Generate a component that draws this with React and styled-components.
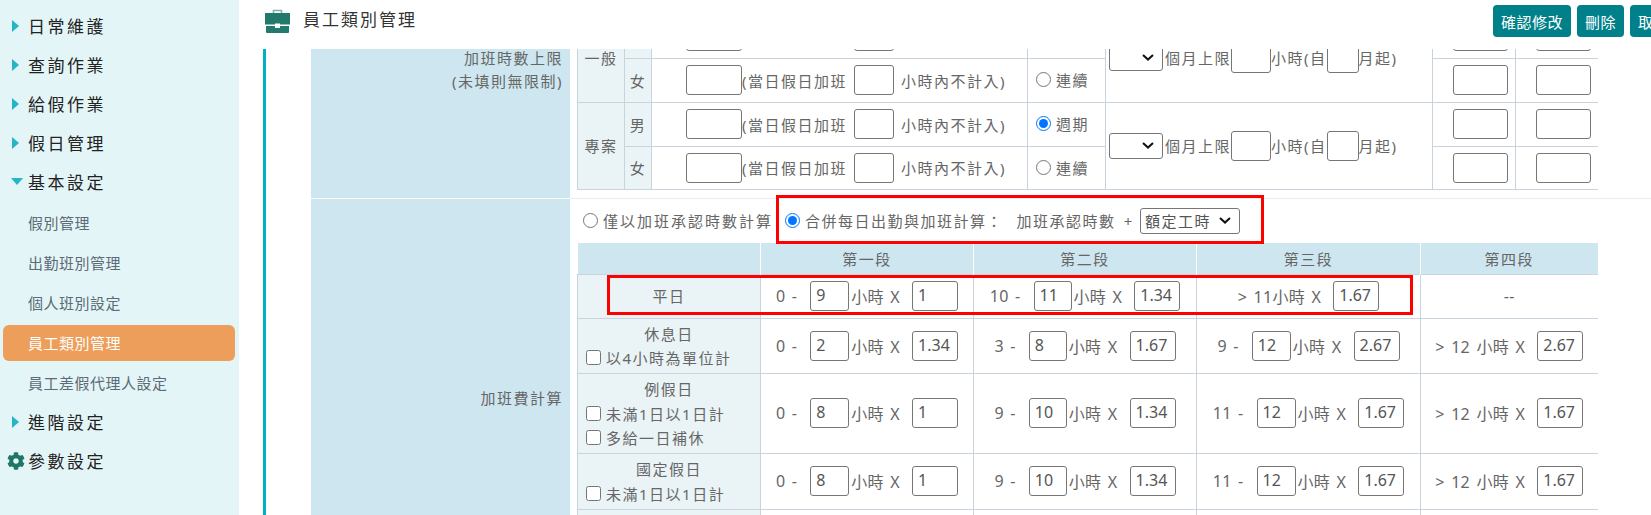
import React from "react";
import styled, { createGlobalStyle } from "styled-components";
import { FaCog } from "react-icons/fa";

const chevron =
  "url(\"data:image/svg+xml,%3Csvg xmlns='http://www.w3.org/2000/svg' width='12' height='7' viewBox='0 0 12 7'%3E%3Cpath d='M1 1l5 4.6L11 1' fill='none' stroke='%23111' stroke-width='2'/%3E%3C/svg%3E\")";

const Global = createGlobalStyle`
  html, body {
    margin: 0;
    height: 100%;
    overflow: hidden;
    background: #fff;
  }
  body {
    font-family: "Noto Sans", "Noto Sans CJK TC", sans-serif;
    font-size: 15px;
    color: #666;
  }
`;

const Page = styled.div`
  display: flex;
  height: 100vh;
  overflow: hidden;
`;

const Sidebar = styled.nav`
  flex: 0 0 239px;
  background: #e4f5f7;
  padding-top: 6px;
  box-sizing: border-box;
`;

const TopItem = styled.div`
  display: flex;
  align-items: center;
  height: 39px;
  padding-left: 7px;
  font-size: 17px;
  letter-spacing: 2.5px;
  color: #222;
`;

const IconSlot = styled.span`
  flex: 0 0 21px;
  display: flex;
  align-items: center;
  color: #1f7566;
`;

const ArrowRight = styled.span`
  margin-left: 5px;
  width: 0;
  height: 0;
  border-top: 6px solid transparent;
  border-bottom: 6px solid transparent;
  border-left: 7px solid #25b5c5;
`;

const ArrowDown = styled.span`
  margin-left: 4px;
  width: 0;
  height: 0;
  border-left: 6px solid transparent;
  border-right: 6px solid transparent;
  border-top: 7px solid #25b5c5;
`;

const SubList = styled.div`
  display: flex;
  flex-direction: column;
  gap: 4px;
  padding: 4px 0 1px;
`;

const SubItem = styled.div`
  height: 36px;
  line-height: 36px;
  margin: 0 4px 0 3px;
  padding-left: 25px;
  border-radius: 6px;
  font-size: 15px;
  letter-spacing: 0.5px;
  color: ${(p) => (p.$active ? "#fff" : "#5c6b75")};
  background: ${(p) => (p.$active ? "#ed9e5a" : "transparent")};
`;

const Main = styled.main`
  flex: 1;
  min-width: 0;
  display: flex;
  flex-direction: column;
  overflow: hidden;
`;

const Header = styled.header`
  flex: 0 0 49px;
  box-sizing: border-box;
  display: flex;
  align-items: flex-start;
  padding: 5px 0 0 26px;
`;

const TitleIcon = styled.svg`
  flex: none;
  width: 25px;
  height: 24px;
  margin: 4px 13px 0 0;
  color: #217a6b;
`;

const Title = styled.h1`
  flex: 1;
  margin: 0;
  font-size: 17px;
  font-weight: 400;
  line-height: 30px;
  letter-spacing: 2px;
  color: #333;
`;

const Buttons = styled.div`
  display: flex;
  flex: none;
  gap: 6px;
  margin-right: -26px;
`;

const Button = styled.button`
  height: 32px;
  padding: 0 8px;
  border: 0;
  border-radius: 4px;
  background: #00818a;
  color: #fff;
  font: inherit;
  letter-spacing: 0.5px;
`;

const Body = styled.div`
  flex: 1;
  min-height: 0;
  margin-left: 24px;
  padding-left: 45px;
  border-left: 3px solid #00b2bf;
  overflow: hidden;
`;

const Form = styled.div`
  margin-top: -35px;
`;

const FormRow = styled.div`
  display: grid;
  grid-template-columns: 259px 1036px;
  border-bottom: ${(p) => (p.$last ? "0" : "1px solid #e3eff3")};
`;

const FormLabel = styled.div`
  display: flex;
  flex-direction: column;
  justify-content: ${(p) => (p.$middle ? "center" : "flex-start")};
  padding: ${(p) => (p.$middle ? "0" : "33px")} 7px 0 0;
  background: #cee6f0;
  border-bottom: ${(p) => (p.$last ? "0" : "1px solid #fff")};
  margin-bottom: ${(p) => (p.$last ? "0" : "-1px")};
  text-align: right;
  line-height: 23px;
  letter-spacing: 1.5px;
`;

const FormField = styled.div`
  position: relative;
  padding: 0 8px 8px 7px;
`;

const Table = styled.table`
  width: 1020px;
  border-collapse: collapse;
  table-layout: fixed;
  letter-spacing: 1.5px;

  td {
    padding: 0;
    border: 1px solid #c8d3de;
  }
  tr > td:last-child {
    border-right: 0;
  }
  tr:first-child > td {
    border-top: 0;
  }
`;

const Shade = styled.td`
  background: #eaf4f6;
  text-align: center;
`;

const LimitRow = styled.tr`
  height: ${(p) => p.$h || 44}px;
`;

const Limit = styled.div`
  display: flex;
  align-items: center;
  padding-left: 34px;
  white-space: nowrap;
`;

const Box = styled.input`
  flex: none;
  box-sizing: border-box;
  width: ${(p) => p.$w}px;
  height: 30px;
  margin: ${(p) => p.$m || "0"};
  padding: 0 0 2px 5px;
  border: 1px solid #767676;
  border-radius: 3px;
  background: #fff;
  color: #555;
  font: inherit;
  font-size: 16px;
  letter-spacing: 0;
  outline: none;
`;

const RadioLabel = styled.label`
  display: inline-flex;
  align-items: center;
  white-space: nowrap;
  margin-left: ${(p) => p.$gap || 0}px;
  letter-spacing: ${(p) => p.$spacing || 1.5}px;
`;

const Radio = styled.input.attrs({ type: "radio" })`
  width: 15px;
  height: 15px;
  margin: 0 5px 0 0;
  flex: none;
`;

const PickCell = styled.div`
  padding-left: 8px;
`;

const Period = styled.div`
  display: flex;
  align-items: center;
  padding-left: 3px;
  white-space: nowrap;
`;

const Select = styled.select`
  flex: none;
  box-sizing: border-box;
  width: ${(p) => p.$w}px;
  height: 26px;
  margin: ${(p) => p.$m || "0"};
  padding: 0 0 0 4px;
  appearance: none;
  border: 1px solid #767676;
  border-radius: 3px;
  background: #fff ${chevron} no-repeat right 8px center;
  color: #555;
  font: inherit;
  letter-spacing: 1.5px;
`;

const InputCell = styled.div`
  display: flex;
  padding-left: 20px;
`;

const ModeLine = styled.div`
  display: flex;
  align-items: center;
  height: 44px;
  padding-left: 6px;
  letter-spacing: 1.5px;
  white-space: nowrap;
`;

const ModeText = styled.span`
  margin-left: 5px;
  word-spacing: 3px;
`;

const HeadCell = styled.td`
  && {
    height: 31px;
    background: #cee6f0;
    border: 0;
    border-left: 1px solid #fff;
    text-align: center;
  }
  &&:first-child {
    border-left: 0;
  }
`;

const DayName = styled.div`
  text-align: center;
  line-height: 24px;
`;

const CheckLine = styled.label`
  display: flex;
  align-items: center;
  height: 24px;
  padding-left: 8px;
  white-space: nowrap;
`;

const Check = styled.input.attrs({ type: "checkbox" })`
  width: 15px;
  height: 15px;
  margin: 0 5px 0 0;
  flex: none;
`;

const Segment = styled.div`
  display: flex;
  align-items: center;
  justify-content: center;
  white-space: nowrap;
  font-size: 16px;
  letter-spacing: 0.3px;
  word-spacing: 2px;
`;

const RateRow = styled.tr`
  height: ${(p) => p.$h}px;
`;

const Marker = styled.div`
  position: absolute;
  left: ${(p) => p.$x}px;
  top: ${(p) => p.$y}px;
  width: ${(p) => p.$w}px;
  height: ${(p) => p.$h}px;
  box-sizing: border-box;
  border: 3px solid #f00;
  pointer-events: none;
`;

const menu = ["日常維護", "查詢作業", "給假作業", "假日管理"];
const subMenu = ["假別管理", "出勤班別管理", "個人班別設定", "員工類別管理", "員工差假代理人設定"];

const limitRows = [
  { group: "一般", span: true, sex: "男", kind: "週期", on: true },
  { sex: "女", kind: "連續" },
  { group: "專案", span: true, sex: "男", kind: "週期", on: true },
  { sex: "女", kind: "連續", h: 43 },
];

const rateRows = [
  {
    h: 44,
    name: "平日",
    segs: [
      ["0 -", "9", "1", 39],
      ["10 -", "11", "1.34", 38],
      ["> 11", null, "1.67"],
    ],
    last: "--",
  },
  {
    h: 55,
    name: "休息日",
    checks: ["以4小時為單位計"],
    segs: [
      ["0 -", "2", "1.34", 39],
      ["3 -", "8", "1.67", 38],
      ["9 -", "12", "2.67", 39],
    ],
    last: "2.67",
  },
  {
    h: 80,
    name: "例假日",
    checks: ["未滿1日以1日計", "多給一日補休"],
    segs: [
      ["0 -", "8", "1", 39],
      ["9 -", "10", "1.34", 38],
      ["11 -", "12", "1.67", 39],
    ],
    last: "1.67",
  },
  {
    h: 56,
    name: "國定假日",
    checks: ["未滿1日以1日計"],
    segs: [
      ["0 -", "8", "1", 39],
      ["9 -", "10", "1.34", 38],
      ["11 -", "12", "1.67", 39],
    ],
    last: "1.67",
  },
];

function RateSegment({ from, upto, rate, width }) {
  if (upto === null) {
    return (
      <Segment>
        {from}小時 X
        <Box $w={46} $m="0 0 0 12px" defaultValue={rate} />
      </Segment>
    );
  }
  return (
    <Segment>
      {from}
      <Box $w={width} $m="0 2px 0 13px" defaultValue={upto} />
      小時 X
      <Box $w={46} $m="0 0 0 12px" defaultValue={rate} />
    </Segment>
  );
}

export default function App() {
  return (
    <Page>
      <Global />
      <Sidebar>
        {menu.map((item) => (
          <TopItem key={item}>
            <IconSlot><ArrowRight /></IconSlot>
            {item}
          </TopItem>
        ))}
        <TopItem>
          <IconSlot><ArrowDown /></IconSlot>
          基本設定
        </TopItem>
        <SubList>
          {subMenu.map((item) => (
            <SubItem key={item} $active={item === "員工類別管理"}>{item}</SubItem>
          ))}
        </SubList>
        <TopItem>
          <IconSlot><ArrowRight /></IconSlot>
          進階設定
        </TopItem>
        <TopItem>
          <IconSlot><FaCog size={18} /></IconSlot>
          參數設定
        </TopItem>
      </Sidebar>

      <Main>
        <Header>
          <TitleIcon viewBox="0 0 25 24">
            <path d="M8.5 5V1.5h8V5" fill="none" stroke="#7fb3a9" strokeWidth="1.6" />
            <path d="M0 4h25v11.5H15v-1h-5v1H0z" fill="currentColor" />
            <path d="M1 17h9v2h5v-2h9v6a1 1 0 0 1-1 1H2a1 1 0 0 1-1-1z" fill="currentColor" />
          </TitleIcon>
          <Title>員工類別管理</Title>
          <Buttons>
            <Button>確認修改</Button>
            <Button>刪除</Button>
            <Button>取消</Button>
          </Buttons>
        </Header>

        <Body>
          <Form>
            <FormRow>
              <FormLabel>
                <span>加班時數上限</span>
                <span>(未填則無限制)</span>
              </FormLabel>
              <FormField>
                <Table>
                  <colgroup>
                    <col width="47" />
                    <col width="27" />
                    <col width="376" />
                    <col width="78" />
                    <col width="327" />
                    <col width="83" />
                    <col width="82" />
                  </colgroup>
                  <tbody>
                    {limitRows.map((row, i) => (
                      <LimitRow key={i} $h={row.h}>
                        {row.span && <Shade rowSpan={2}>{row.group}</Shade>}
                        <Shade>{row.sex}</Shade>
                        <td>
                          <Limit>
                            <Box $w={56} />
                            (當日假日加班
                            <Box $w={40} $m="0 7px" />
                            小時內不計入)
                          </Limit>
                        </td>
                        <td>
                          <PickCell>
                            <RadioLabel>
                              <Radio name={`kind${i}`} defaultChecked={row.on} />
                              {row.kind}
                            </RadioLabel>
                          </PickCell>
                        </td>
                        {row.span && (
                          <td rowSpan={2}>
                            <Period>
                              <Select $w={54} $m="0 2px 0 0"><option></option></Select>
                              個月上限
                              <Box $w={40} />
                              小時(自
                              <Box $w={32} />
                              月起)
                            </Period>
                          </td>
                        )}
                        <td><InputCell><Box $w={55} /></InputCell></td>
                        <td><InputCell><Box $w={55} /></InputCell></td>
                      </LimitRow>
                    ))}
                  </tbody>
                </Table>
              </FormField>
            </FormRow>

            <FormRow $last>
              <FormLabel $middle $last>加班費計算</FormLabel>
              <FormField>
                <ModeLine>
                  <RadioLabel $spacing={2}>
                    <Radio name="mode" />
                    僅以加班承認時數計算
                  </RadioLabel>
                  <RadioLabel $gap={12}>
                    <Radio name="mode" defaultChecked />
                    合併每日出勤與加班計算：
                  </RadioLabel>
                  <ModeText>&nbsp;加班承認時數 +</ModeText>
                  <Select $w={100} $m="0 0 0 6px" defaultValue="額定工時">
                    <option>額定工時</option>
                  </Select>
                </ModeLine>
                <Table>
                  <colgroup>
                    <col width="183" />
                    <col width="213" />
                    <col width="223" />
                    <col width="224" />
                    <col width="177" />
                  </colgroup>
                  <tbody>
                    <tr>
                      <HeadCell />
                      <HeadCell>第一段</HeadCell>
                      <HeadCell>第二段</HeadCell>
                      <HeadCell>第三段</HeadCell>
                      <HeadCell>第四段</HeadCell>
                    </tr>
                    {rateRows.map((row) => (
                      <RateRow key={row.name} $h={row.h}>
                        <Shade>
                          <DayName>{row.name}</DayName>
                          {row.checks && row.checks.map((c) => (
                            <CheckLine key={c}><Check />{c}</CheckLine>
                          ))}
                        </Shade>
                        {row.segs.map((s, i) => (
                          <td key={i}>
                            <RateSegment from={s[0]} upto={s[1]} rate={s[2]} width={s[3]} />
                          </td>
                        ))}
                        <td>
                          {row.last === "--" ? (
                            <Segment>--</Segment>
                          ) : (
                            <Segment>
                              &gt; 12 小時 X
                              <Box $w={46} $m="0 0 0 12px" defaultValue={row.last} />
                            </Segment>
                          )}
                        </td>
                      </RateRow>
                    ))}
                    <RateRow $h={80}>
                      <Shade />
                      <td />
                      <td />
                      <td />
                      <td />
                    </RateRow>
                  </tbody>
                </Table>
                <Marker $x={206} $y={-4} $w={488} $h={49} />
                <Marker $x={37} $y={76} $w={806} $h={40} />
              </FormField>
            </FormRow>
          </Form>
        </Body>
      </Main>
    </Page>
  );
}
